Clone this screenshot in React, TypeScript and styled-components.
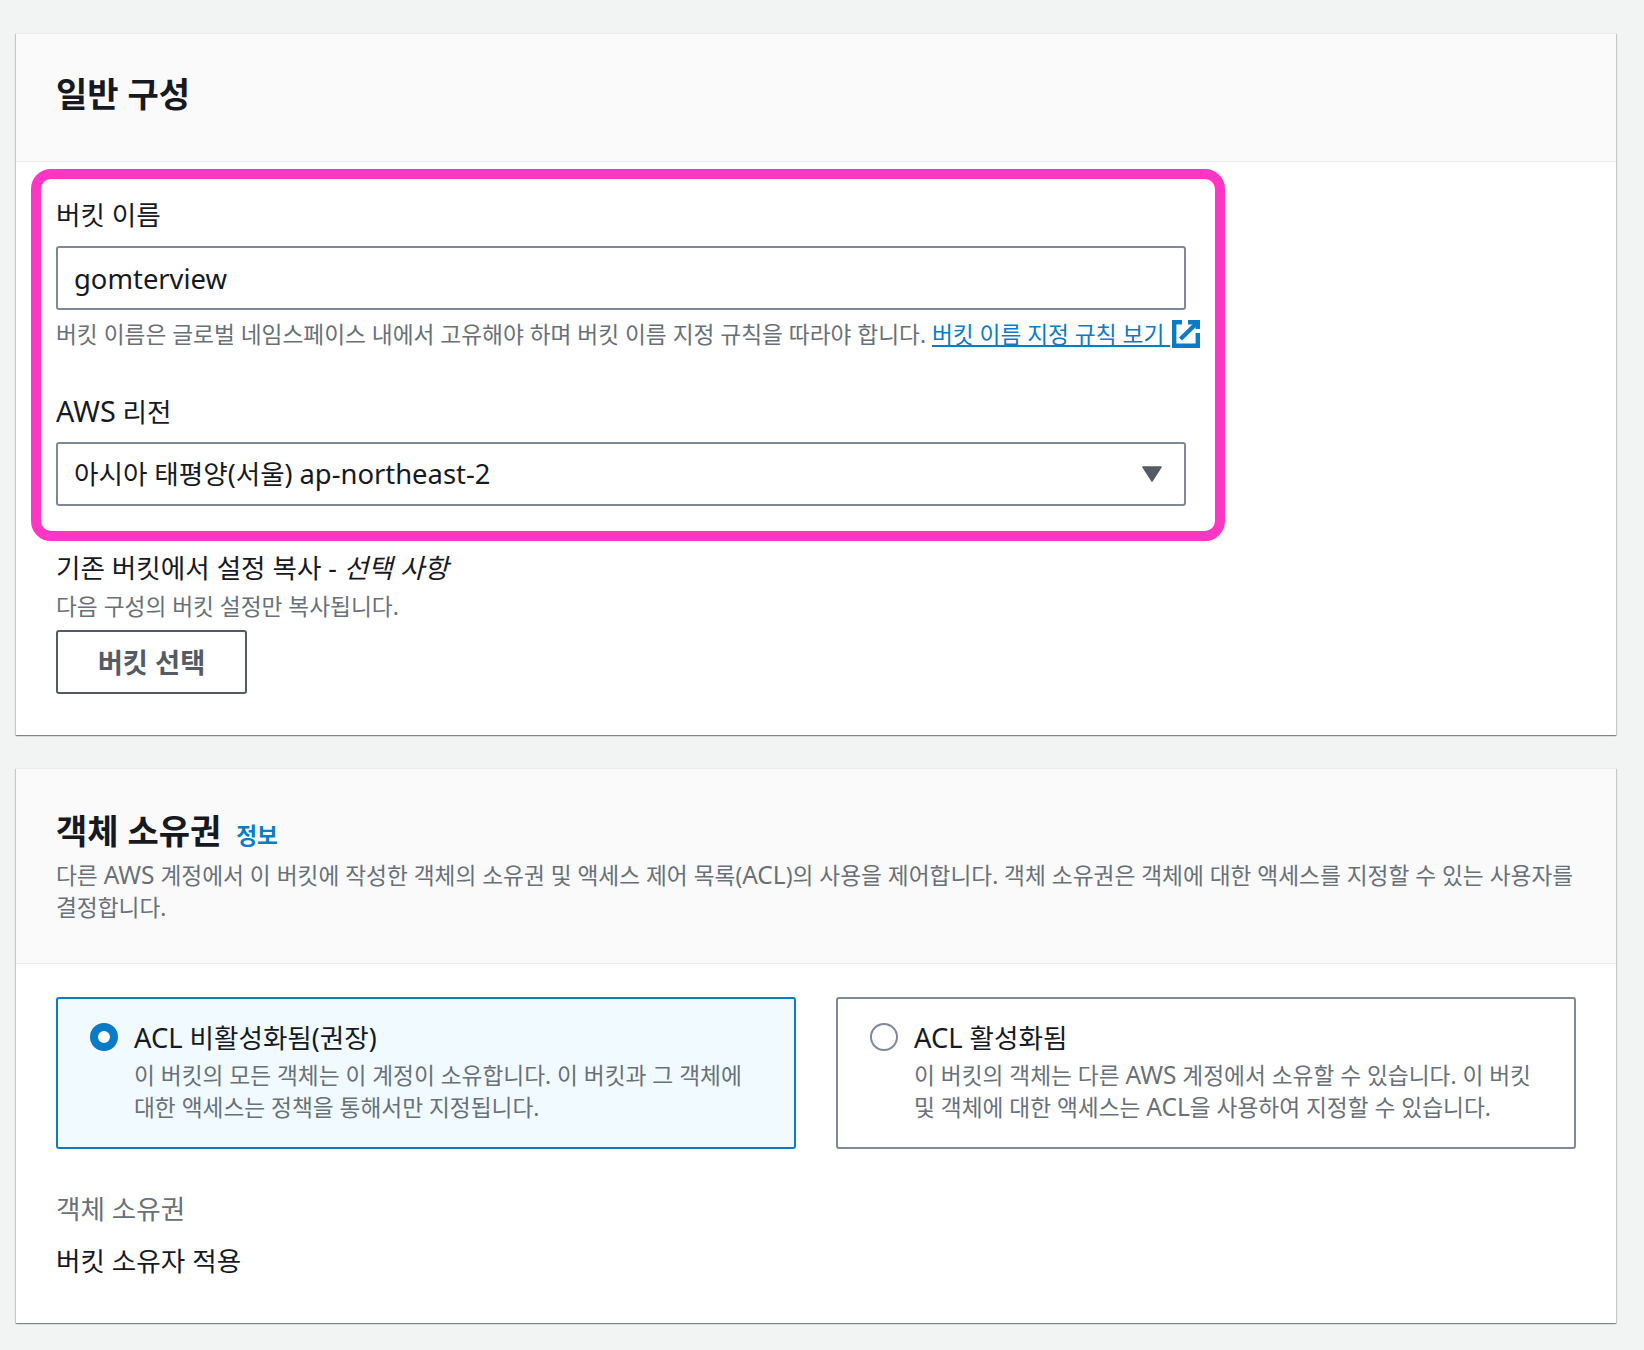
import React from "react";
import styled, { createGlobalStyle } from "styled-components";

const Global = createGlobalStyle`
  html, body { margin: 0; padding: 0; background: #f2f3f3; }
  body { font-family: "Noto Sans", "Noto Sans CJK KR", sans-serif; color: #16191f; }
  * { box-sizing: border-box; }
`;

const Page = styled.div`
  width: 1644px;
  height: 1350px;
  padding: 33px 28px 0 16px;
  display: flex;
  flex-direction: column;
  gap: 33px;
`;

const Card = styled.section`
  position: relative;
  background: #fff;
  box-shadow: 0 1px 1px 0 rgba(0, 28, 36, 0.3), 1px 1px 1px 0 rgba(0, 28, 36, 0.15), -1px 1px 1px 0 rgba(0, 28, 36, 0.15);
`;

const Header = styled.header<{ $top: number; $bottom: number }>`
  background: #fafafa;
  border-top: 1px solid #eaeded;
  border-bottom: 1px solid #eaeded;
  padding: ${(p) => p.$top}px 40px ${(p) => p.$bottom}px;
`;

const TitleRow = styled.div`
  display: flex;
  align-items: baseline;
  gap: 15px;
`;

const Title = styled.h2`
  margin: 0;
  font-size: 34px;
  line-height: 44px;
  font-weight: 700;
  color: #16191f;
`;

const InfoLink = styled.a`
  font-size: 22.7px;
  font-weight: 700;
  color: #0a7bc4;
`;

const Description = styled.p`
  margin: 7px 0 0;
  font-size: 22.7px;
  line-height: 32px;
  color: #687078;
  white-space: nowrap;
`;

const Body = styled.div<{ $top: number; $bottom: number }>`
  padding: ${(p) => p.$top}px 40px ${(p) => p.$bottom}px;
`;

const Label = styled.div<{ $mt?: number }>`
  font-size: 26.6px;
  line-height: 32px;
  margin-top: ${(p) => p.$mt ?? 0}px;
  color: #16191f;
`;

const Acronym = styled.span`
  font-size: 1.08em;
  line-height: 0;
`;

const Latin = styled.span`
  font-size: 1.03em;
  line-height: 0;
`;

const Field = styled.div`
  width: 1130px;
  height: 64px;
  margin-top: 15px;
  padding: 1px 16px 0;
  display: flex;
  align-items: center;
  justify-content: space-between;
  border: 2px solid #7d8998;
  border-radius: 3px;
  background: #fff;
  font-size: 26.6px;
  color: #16191f;
`;

const FieldValue = styled.span`
  line-height: 32px;
`;

const SelectField = styled(Field)`
  margin-top: 14px;
  padding: 0 22px 0 16px;
`;

const Help = styled.div<{ $mt: number }>`
  margin-top: ${(p) => p.$mt}px;
  font-size: 22.7px;
  line-height: 32px;
  height: 32px;
  color: #687078;
  white-space: nowrap;
`;

const HelpLink = styled.a`
  color: #0a7bc4;
  text-decoration: underline;
  svg { vertical-align: -3px; margin: -2px 0 -2px 2px; }
`;

const Italic = styled.em`
  font-style: italic;
`;

const Button = styled.button`
  display: block;
  width: 191px;
  height: 64px;
  margin-top: 7px;
  padding: 0 0 3px;
  border: 2px solid #545b64;
  border-radius: 3px;
  background: #fff;
  font-family: inherit;
  font-size: 27.3px;
  font-weight: 700;
  color: #545b64;
`;

const Highlight = styled.div`
  position: absolute;
  left: 15px;
  top: 136px;
  width: 1194px;
  height: 372px;
  border: 10px solid #ff35c4;
  border-radius: 20px;
  pointer-events: none;
`;

const Tiles = styled.div`
  display: grid;
  grid-template-columns: 740px 740px;
  gap: 40px;
`;

const Tile = styled.div<{ $selected?: boolean }>`
  height: 152px;
  padding: 23px 20px 0 32px;
  display: grid;
  grid-template-columns: 28px 1fr;
  column-gap: 16px;
  border: 2px solid ${(p) => (p.$selected ? "#0a7bc4" : "#7d8998")};
  border-radius: 3px;
  background: ${(p) => (p.$selected ? "#f1faff" : "#fff")};
`;

const Radio = styled.span<{ $selected?: boolean }>`
  width: 28px;
  height: 28px;
  margin-top: 1px;
  border-radius: 50%;
  background: #fff;
  border: ${(p) => (p.$selected ? "8px solid #0a7bc4" : "2px solid #7d8998")};
`;

const TileTitle = styled.div`
  font-size: 26.6px;
  line-height: 32px;
  color: #16191f;
`;

const TileDesc = styled.div`
  margin-top: 6px;
  font-size: 22.7px;
  line-height: 32px;
  color: #687078;
  white-space: nowrap;
`;

const ValueLabel = styled.div`
  margin-top: 44px;
  font-size: 26.6px;
  line-height: 32px;
  color: #687078;
`;

const Value = styled.div`
  margin-top: 20px;
  font-size: 26.6px;
  line-height: 32px;
  color: #16191f;
`;

const ExternalIcon = () => (
  <svg width="28" height="28" viewBox="0 0 28 28" fill="none" stroke="#0a7bc4" strokeWidth="4.4">
    <path d="M10 2.2H2.2v23.6h23.6V13" />
    <path d="M16 2.2h9.8V9" />
    <path d="M8.5 19 25.5 2.5" />
  </svg>
);

const Caret = () => (
  <svg width="20" height="16" viewBox="0 0 20 16">
    <path d="M1 1h18l-9 14z" fill="#545b64" stroke="#545b64" strokeWidth="1.5" strokeLinejoin="round" />
  </svg>
);

export default function App() {
  return (
    <>
      <Global />
      <Page>
        <Card>
          <Header $top={38} $bottom={45}>
            <Title>일반 구성</Title>
          </Header>
          <Body $top={37} $bottom={41}>
            <Label>버킷 이름</Label>
            <Field>
              <Latin>gomterview</Latin>
            </Field>
            <Help $mt={9}>
              버킷 이름은 글로벌 네임스페이스 내에서 고유해야 하며 버킷 이름 지정 규칙을 따라야 합니다.{" "}
              <HelpLink>
                버킷 이름 지정 규칙 보기 <ExternalIcon />
              </HelpLink>
            </Help>
            <Label $mt={45}>
              <Acronym>AWS</Acronym> 리전
            </Label>
            <SelectField>
              <FieldValue>
                아시아 태평양(서울) <Latin>ap-northeast-2</Latin>
              </FieldValue>
              <Caret />
            </SelectField>
            <Label $mt={46}>
              기존 버킷에서 설정 복사 - <Italic>선택 사항</Italic>
            </Label>
            <Help $mt={7}>다음 구성의 버킷 설정만 복사됩니다.</Help>
            <Button>버킷 선택</Button>
          </Body>
          <Highlight />
        </Card>
        <Card>
          <Header $top={40} $bottom={39}>
            <TitleRow>
              <Title>객체 소유권</Title>
              <InfoLink>정보</InfoLink>
            </TitleRow>
            <Description>
              다른 <Acronym>AWS</Acronym> 계정에서 이 버킷에 작성한 객체의 소유권 및 액세스 제어 목록(<Acronym>ACL</Acronym>)의 사용을 제어합니다. 객체 소유권은 객체에 대한 액세스를 지정할 수 있는 사용자를
              <br />
              결정합니다.
            </Description>
          </Header>
          <Body $top={33} $bottom={46}>
            <Tiles>
              <Tile $selected>
                <Radio $selected />
                <div>
                  <TileTitle>
                    <Latin>ACL</Latin> 비활성화됨(권장)
                  </TileTitle>
                  <TileDesc>
                    이 버킷의 모든 객체는 이 계정이 소유합니다. 이 버킷과 그 객체에
                    <br />
                    대한 액세스는 정책을 통해서만 지정됩니다.
                  </TileDesc>
                </div>
              </Tile>
              <Tile>
                <Radio />
                <div>
                  <TileTitle>
                    <Latin>ACL</Latin> 활성화됨
                  </TileTitle>
                  <TileDesc>
                    이 버킷의 객체는 다른 <Acronym>AWS</Acronym> 계정에서 소유할 수 있습니다. 이 버킷
                    <br />
                    및 객체에 대한 액세스는 <Acronym>ACL</Acronym>을 사용하여 지정할 수 있습니다.
                  </TileDesc>
                </div>
              </Tile>
            </Tiles>
            <ValueLabel>객체 소유권</ValueLabel>
            <Value>버킷 소유자 적용</Value>
          </Body>
        </Card>
      </Page>
    </>
  );
}
